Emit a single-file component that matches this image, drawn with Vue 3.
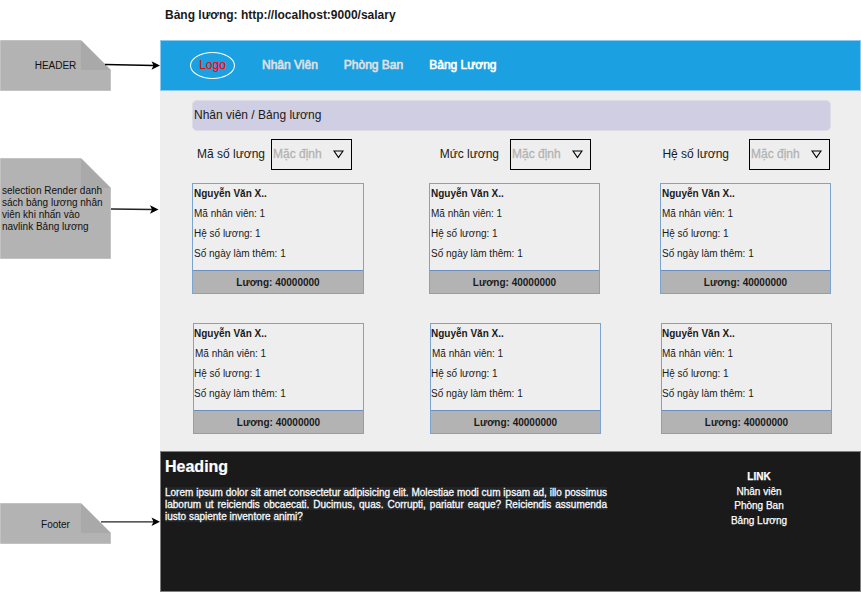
<script setup>
const notes = [
  { key: 'header', label: 'HEADER', height: 51, arrow: { x: 105, y1: 24.5, y2: 25.5, tip: 160, color: '#000' } },
  { key: 'list', label: 'selection Render danh sách bảng lương nhân viên khi nhấn vào navlink Bảng lương', height: 101, arrow: { x: 111, y1: 51, y2: 51.5, tip: 158.5, color: '#222' } },
  { key: 'footer', label: 'Footer', height: 41, arrow: { x: 101, y1: 18.8, y2: 18.8, tip: 160, color: '#222' } },
]
const nav = ['Nhân Viên', 'Phòng Ban', 'Bảng Lương']
const filters = ['Mã số lương', 'Mức lương', 'Hệ số lương']
const cards = [
  { id: 1, wide: true }, { id: 2 }, { id: 3 },
  { id: 4, lower: true, shifted: true }, { id: 5, lower: true, shifted: true }, { id: 6, lower: true },
]
const links = ['Nhân viên', 'Phòng Ban', 'Bảng Lương']
</script>

<template>
  <div class="page">
    <aside class="notes">
      <div v-for="n in notes" :key="n.key" class="note" :class="'note-' + n.key">
        <svg class="shape" width="162" :height="n.height" :viewBox="`0 0 162 ${n.height}`">
          <path :d="`M0.5 0.5H81L110.5 30V${n.height - 0.5}H0.5Z`" fill="#b3b3b3" stroke="#c2c2c2" />
          <path d="M81 0.5V30H110.5Z" fill="#a9a9a9" />
          <path :d="`M${n.arrow.x} ${n.arrow.y1}L${n.arrow.tip - 6} ${n.arrow.y2}`" :stroke="n.arrow.color" stroke-width="1.3" />
          <path :d="`M${n.arrow.tip} ${n.arrow.y2}l-8.5 -4.2l2 4.2l-2 4.2z`" fill="#000" />
        </svg>
        <span class="note-text">{{ n.label }}</span>
      </div>
    </aside>

    <div class="main">
      <div class="title">Bảng lương: http://localhost:9000/salary</div>
      <header class="topbar">
        <div class="logo">Logo</div>
        <nav class="nav">
          <a v-for="(item, i) in nav" :key="item" :class="{ active: i === 2 }">{{ item }}</a>
        </nav>
      </header>

      <section class="content">
        <div class="crumb">Nhân viên / Bảng lương</div>
        <div class="filters">
          <div v-for="(f, i) in filters" :key="f" class="filter" :class="'filter-' + i">
            <span class="filter-label">{{ f }}</span>
            <div class="select">
              <span class="value">Mặc định</span>
              <svg width="11" height="9" viewBox="0 0 11 9"><path d="M1 1H10L5.5 7.5Z" fill="none" stroke="#000" stroke-width="1.2" /></svg>
            </div>
          </div>
        </div>
        <div class="cards">
          <article v-for="c in cards" :key="c.id" class="card" :class="{ lower: c.lower, wide: c.wide }">
            <div class="info">
              <b>Nguyễn Văn X..</b>
              <span :class="{ shifted: c.shifted }">Mã nhân viên: 1</span>
              <span>Hệ số lương: 1</span>
              <span>Số ngày làm thêm: 1</span>
            </div>
            <div class="salary">Lương: 40000000</div>
          </article>
        </div>
      </section>

      <footer class="footer">
        <div class="about">
          <h1>Heading</h1>
          <p><span>Lorem ipsum dolor sit amet consectetur adipisicing elit. Molestiae modi cum ipsam ad, illo possimus laborum ut reiciendis obcaecati. Ducimus, quas. Corrupti, pariatur eaque? Reiciendis assumenda iusto sapiente inventore animi?</span></p>
        </div>
        <div class="links">
          <b>LINK</b>
          <a v-for="l in links" :key="l">{{ l }}</a>
        </div>
      </footer>
    </div>
  </div>
</template>

<style>
body { background: #fff; overflow: hidden; }
</style>

<style scoped>
* { box-sizing: border-box; }
.page {
  display: flex;
  width: 861px;
  height: 592px;
  font-family: "Liberation Sans", Arial, sans-serif;
  font-size: 12px;
  color: #1a1a1a;
}
.notes { width: 160px; flex: none; padding-top: 40px; }
.note { position: relative; width: 111px; display: flex; align-items: center; font-size: 10px; line-height: 12px; color: #111; }
.shape { position: absolute; left: 0; top: 0; z-index: 1; }
.note-text { position: relative; z-index: 2; }
.note-header { height: 51px; margin-bottom: 67px; justify-content: center; }
.note-list { height: 101px; margin-bottom: 244px; padding-left: 2px; }
.note-footer { height: 41px; justify-content: center; padding-top: 2px; }
.main { width: 701px; flex: none; display: flex; flex-direction: column; }
.title { height: 40px; padding: 8px 0 0 5px; line-height: 14px; font-weight: bold; }
.topbar {
  height: 51px;
  display: flex;
  align-items: center;
  padding: 0 0 0 29px;
  background: #1ba1e2;
  border: 1px solid #8ccbee;
}
.logo {
  width: 45px;
  height: 27px;
  padding-bottom: 2px;
  border: 1px solid #fff;
  border-radius: 50%;
  color: #f00;
  display: flex;
  align-items: center;
  justify-content: center;
  -webkit-text-stroke: 0.2px #f00;
}
.nav {
  display: flex;
  gap: 26px;
  margin-left: 27px;
  padding-bottom: 2px;
  color: #e0e0e0;
  line-height: 14px;
  -webkit-text-stroke: 0.6px currentColor;
}
.nav .active { color: #fff; }
.content { height: 360px; background: #eee; padding: 9px 30px 0 32px; }
.crumb {
  height: 31px;
  width: 639px;
  padding-left: 1px;
  border: 1px solid #dcdbe8;
  border-radius: 5px;
  background: #d0cee2;
  line-height: 29px;
}
.filters { display: grid; grid-template-columns: repeat(3, 239px); margin: 8px 0 0 -79px; height: 31px; }
.filter { display: flex; align-items: center; justify-content: flex-end; }
.filter-label { white-space: nowrap; padding-bottom: 2px; }
.filter-0 .filter-label { margin-right: 6px; }
.filter-1 .filter-label { margin-right: 11px; }
.filter-2 .filter-label { margin-right: 20px; }
.select {
  width: 81px;
  height: 31px;
  border: 1px solid #000;
  display: flex;
  align-items: center;
  justify-content: space-between;
  padding: 0 7px 0 1px;
  color: #b3b3b3;
}
.value { padding-bottom: 2px; -webkit-text-stroke: 0.3px currentColor; }
.cards { display: grid; grid-template-columns: 237px 231px 171px; row-gap: 29px; margin-top: 13px; }
.card { width: 171px; height: 111px; border: 1px solid #7ba3cf; font-size: 10px; }
.card.wide { width: 172px; }
.info { height: 86px; display: flex; flex-direction: column; line-height: 20px; padding-left: 1px; }
.card.lower { margin-left: 1px; }
.lower .info { padding-left: 0; }
.shifted { padding-left: 1px; }
.salary {
  height: 23px;
  border-top: 1px solid #6c8ebf;
  background: #b3b3b3;
  text-align: center;
  font-weight: bold;
  line-height: 23px;
}
.footer { height: 141px; display: flex; background: #1a1a1a; border: 1px solid #808080; color: #fff; font-size: 10px; }
.about { width: 442px; margin-left: 4px; }
h1 { margin: 5px 0 0; font-size: 16px; line-height: 20px; -webkit-text-stroke: 0.2px #fff; }
p { margin: 10px 0 0; line-height: 12px; text-align: justify; color: #f8f9fa; -webkit-text-stroke: 0.3px #f8f9fa; }
p span { background: #212529; }
.links {
  margin: 18px 0 0 102px;
  width: 100px;
  display: flex;
  flex-direction: column;
  text-align: center;
  line-height: 14.7px;
  -webkit-text-stroke: 0.25px #fff;
}
</style>
